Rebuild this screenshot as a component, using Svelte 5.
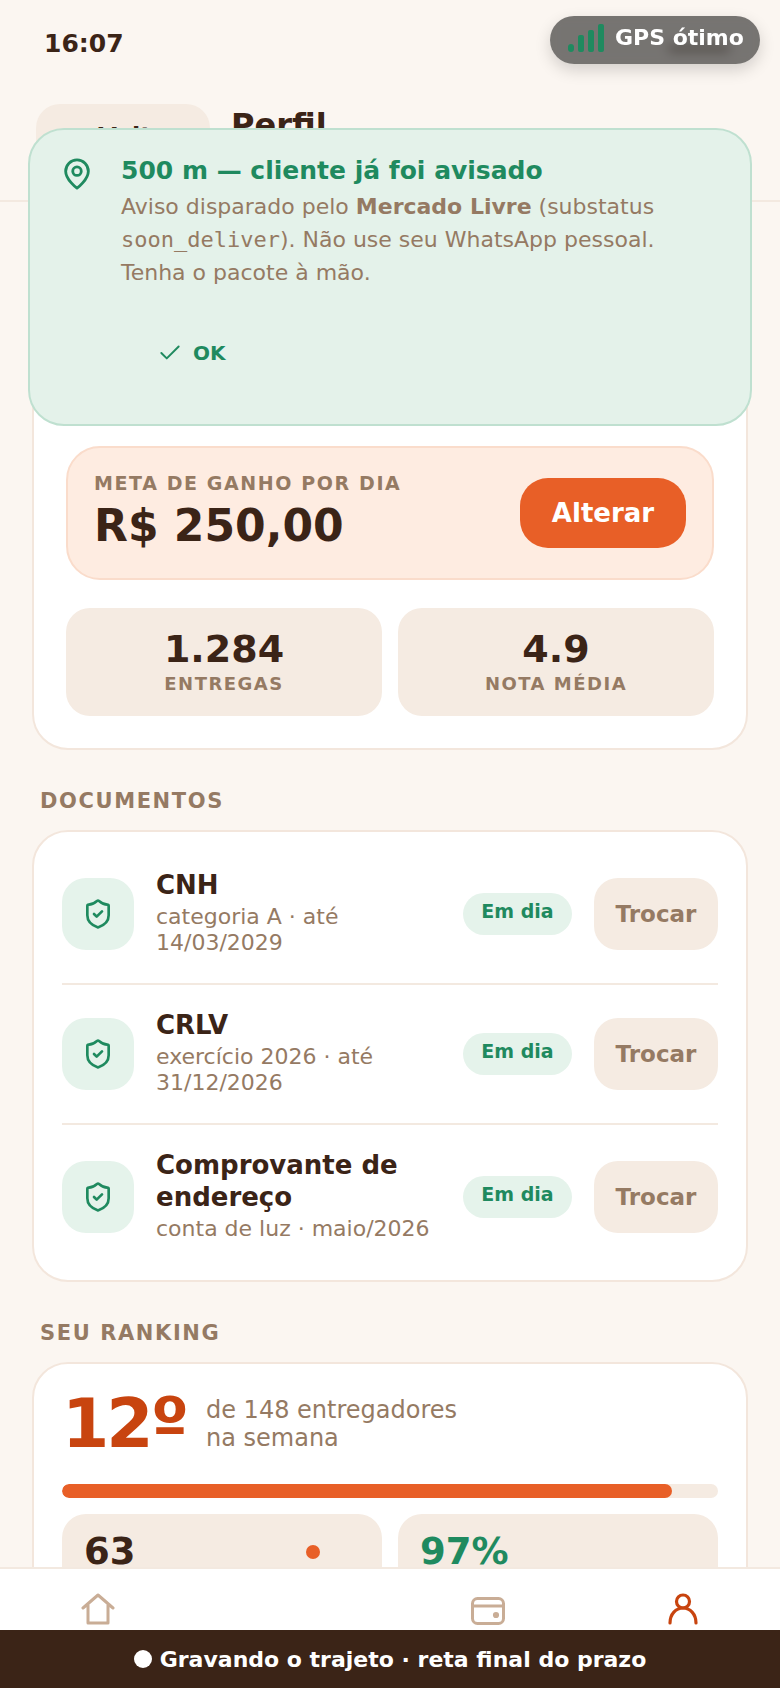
<script lang="ts">
  const docs = [
    { nome: 'CNH', detalhe: 'categoria A · até 14/03/2029' },
    { nome: 'CRLV', detalhe: 'exercício 2026 · até 31/12/2026' },
    { nome: 'Comprovante de endereço', detalhe: 'conta de luz · maio/2026' }
  ];
  const progresso = 93;
</script>

<div class="screen">
  <div class="status">
    <span class="time">16:07</span>
    <span class="status-icons"></span>
  </div>

  <header class="head">
    <button class="back">
      <svg viewBox="0 0 24 24" width="24" height="24" fill="none" stroke="currentColor" stroke-width="2.5" stroke-linecap="round" stroke-linejoin="round"><path d="M19 12H5M11 6l-6 6 6 6" /></svg>
      Voltar
    </button>
    <h1>Perfil</h1>
  </header>

  <main>
    <section class="card card-meta">
      <div class="perfil-space"></div>
      <div class="meta">
        <div class="meta-text">
          <div class="meta-label">META DE GANHO POR DIA</div>
          <div class="meta-value">R$ 250,00</div>
        </div>
        <button class="alterar">Alterar</button>
      </div>
      <div class="stats">
        <div class="stat">
          <div class="stat-value">1.284</div>
          <div class="stat-label">ENTREGAS</div>
        </div>
        <div class="stat">
          <div class="stat-value">4.9</div>
          <div class="stat-label">NOTA MÉDIA</div>
        </div>
      </div>
    </section>

    <h2>DOCUMENTOS</h2>
    <section class="card card-docs">
      {#each docs as d}
        <div class="doc">
          <div class="doc-icon">
            <svg viewBox="0 0 24 24" width="32" height="32" fill="none" stroke="currentColor" stroke-width="2" stroke-linecap="round" stroke-linejoin="round">
              <path d="M20 13c0 5-3.5 7.5-7.66 8.95a1 1 0 0 1-.67-.01C7.5 20.5 4 18 4 13V6a1 1 0 0 1 1-1c2 0 4.5-1.2 6.24-2.72a1.17 1.17 0 0 1 1.52 0C14.51 3.81 17 5 19 5a1 1 0 0 1 1 1z" />
              <path d="m9 12 2 2 4-4" />
            </svg>
          </div>
          <div class="doc-text">
            <div class="doc-nome">{d.nome}</div>
            <div class="doc-detalhe">{d.detalhe}</div>
          </div>
          <span class="badge">Em dia</span>
          <button class="trocar">Trocar</button>
        </div>
      {/each}
    </section>

    <h2 class="h-rank">SEU RANKING</h2>
    <section class="card card-rank">
      <div class="rank-top">
        <span class="rank-pos">12º</span>
        <span class="rank-sub">de 148 entregadores<br />na semana</span>
      </div>
      <div class="bar"><div class="bar-fill" style="width:{progresso}%"></div></div>
      <div class="rank-stats">
        <div class="rank-stat"><div class="rank-value">63</div></div>
        <div class="rank-stat"><div class="rank-value green">97%</div></div>
      </div>
    </section>
  </main>

  <!-- selo do GPS por cima da barra de status -->
  <div class="gps">
    <svg viewBox="0 0 36 28" width="36" height="28" fill="currentColor">
      <rect x="0" y="20" width="6" height="8" rx="3" />
      <rect x="10" y="11" width="6" height="17" rx="2" />
      <rect x="20" y="6" width="6" height="22" rx="2" />
      <rect x="30" y="0" width="6" height="28" rx="2" />
    </svg>
    GPS ótimo
  </div>

  <!-- aviso de proximidade -->
  <div class="toast">
    <svg class="pin" viewBox="0 0 24 24" width="34" height="34" fill="none" stroke="currentColor" stroke-width="2" stroke-linecap="round" stroke-linejoin="round">
      <path d="M20 10c0 6-8 12-8 12s-8-6-8-12a8 8 0 0 1 16 0Z" />
      <circle cx="12" cy="10" r="3" />
    </svg>
    <div class="toast-body">
      <div class="toast-title">500 m — cliente já foi avisado</div>
      <p>Aviso disparado pelo <strong>Mercado Livre</strong> (substatus <code>soon_deliver</code>). Não use seu WhatsApp pessoal. Tenha o pacote à mão.</p>
      <button class="ok">
        <svg viewBox="0 0 24 24" width="26" height="26" fill="none" stroke="currentColor" stroke-width="1.8" stroke-linecap="round" stroke-linejoin="round"><path d="M20 6 9 17l-5-5" /></svg>
        OK
      </button>
    </div>
  </div>

  <nav class="nav">
    <span class="nav-dot"></span>
    <div class="nav-item">
      <svg viewBox="0 0 34 32" width="34" height="32" fill="none" stroke="currentColor" stroke-width="3" stroke-linecap="round" stroke-linejoin="round">
        <path d="M2 15 17 2l15 13M7 12v18h20V12" />
      </svg>
    </div>
    <div class="nav-item"></div>
    <div class="nav-item">
      <svg viewBox="0 0 34 28" width="34" height="28" fill="none" stroke="currentColor" stroke-width="3" stroke-linecap="round" stroke-linejoin="round">
        <rect x="1.5" y="1.5" width="31" height="25" rx="5" />
        <path d="M1.5 9h31" />
        <circle cx="25" cy="18" r="1.6" />
      </svg>
    </div>
    <div class="nav-item active">
      <svg viewBox="0 0 30 32" width="30" height="32" fill="none" stroke="currentColor" stroke-width="3.2" stroke-linecap="round" stroke-linejoin="round">
        <circle cx="15" cy="8.5" r="6.5" />
        <path d="M2 30c0-9 6-15 13-15s13 6 13 15" />
      </svg>
    </div>
  </nav>

  <div class="rec"><span class="rec-dot"></span>Gravando o trajeto · reta final do prazo</div>
</div>

<style>
  :global(body) {
    background: #fbf6f1;
  }

  .screen {
    position: relative;
    height: 1688px;
    overflow: hidden;
    background: #fbf6f1;
    color: #3b2417;
    font-family: "DejaVu Sans", sans-serif;
  }

  button {
    font-family: inherit;
    border: 0;
    cursor: pointer;
  }

  .status {
    height: 104px;
    box-sizing: border-box;
    padding: 29px 50px 0 44px;
    display: flex;
    justify-content: space-between;
    align-items: flex-start;
  }
  .time {
    font-size: 25px;
    font-weight: 700;
    line-height: 30px;
  }
  /* icones do sistema, ficam atras do selo do GPS */
  .status-icons {
    width: 62px;
    height: 5px;
    margin-top: 17px;
    border-radius: 3px;
    background: #3b2417;
    opacity: 0.55;
  }

  .head {
    display: flex;
    align-items: flex-start;
    gap: 21px;
    padding: 0 36px 30px;
    border-bottom: 2px solid #f3e9e0;
  }
  .back {
    width: 174px;
    height: 66px;
    border-radius: 24px;
    background: #f5ebe2;
    color: #3b2417;
    font-size: 24px;
    font-weight: 700;
    display: flex;
    align-items: center;
    justify-content: center;
    gap: 8px;
  }
  h1 {
    margin: 3px 0 0;
    font-size: 32px;
    line-height: 36px;
    font-weight: 700;
  }

  main {
    padding: 24px 32px 0;
  }

  .card {
    background: #fff;
    border: 2px solid #f3e6dc;
    border-radius: 36px;
  }
  .card-meta {
    padding: 32px;
  }
  .perfil-space {
    height: 154px;
    margin-bottom: 32px;
  }

  .meta {
    display: flex;
    align-items: center;
    justify-content: space-between;
    height: 134px;
    box-sizing: border-box;
    padding: 0 26px;
    background: #feece1;
    border: 2px solid #fadccb;
    border-radius: 34px;
  }
  .meta-text {
    padding-bottom: 3px;
  }
  .meta-label {
    font-size: 19px;
    font-weight: 700;
    letter-spacing: 1.6px;
    line-height: 24px;
    color: #957a63;
  }
  .meta-value {
    margin-top: 5px;
    font-size: 44px;
    font-weight: 700;
    line-height: 52px;
  }
  .alterar {
    width: 166px;
    height: 70px;
    border-radius: 28px;
    background: #e85f27;
    color: #fff;
    font-size: 26px;
    font-weight: 700;
  }

  .stats {
    display: grid;
    grid-template-columns: 1fr 1fr;
    gap: 16px;
    margin-top: 28px;
  }
  .stat {
    height: 108px;
    box-sizing: border-box;
    padding-top: 19px;
    background: #f5ebe2;
    border-radius: 24px;
    text-align: center;
  }
  .stat-value {
    font-size: 38px;
    font-weight: 700;
    line-height: 45px;
  }
  .stat-label {
    font-size: 18px;
    font-weight: 700;
    letter-spacing: 1.5px;
    line-height: 24px;
    color: #957a63;
  }

  h2 {
    margin: 37px 0 15px 8px;
    font-size: 21px;
    font-weight: 700;
    letter-spacing: 1.6px;
    line-height: 28px;
    color: #957a63;
  }

  .card-docs {
    padding: 13px 28px 11px;
  }
  .doc {
    display: flex;
    align-items: center;
    gap: 22px;
    padding: 23.5px 0;
    border-bottom: 2px solid #f3e9e0;
  }
  .doc:last-child {
    border-bottom: 0;
  }
  .doc-icon {
    flex: none;
    width: 72px;
    height: 72px;
    border-radius: 24px;
    background: #e5f3eb;
    color: #1f8a5f;
    display: grid;
    place-items: center;
  }
  .doc-text {
    flex: 1;
    min-width: 0;
    padding-bottom: 4px;
  }
  .doc-nome {
    font-size: 26px;
    font-weight: 700;
    line-height: 32px;
  }
  .doc-detalhe {
    margin-top: 3px;
    font-size: 22px;
    line-height: 26px;
    color: #957a63;
  }
  .badge {
    flex: none;
    width: 109px;
    height: 42px;
    border-radius: 21px;
    background: #e5f3eb;
    color: #1f8a5f;
    font-size: 19px;
    font-weight: 700;
    text-align: center;
    line-height: 36px;
  }
  .trocar {
    flex: none;
    width: 124px;
    height: 72px;
    border-radius: 24px;
    background: #f5ebe2;
    color: #957a63;
    font-size: 23px;
    font-weight: 700;
  }

  .card-rank {
    padding: 28px;
  }
  .rank-top {
    display: flex;
    align-items: center;
    gap: 20px;
    height: 64px;
  }
  .rank-pos {
    font-size: 68px;
    font-weight: 700;
    line-height: 64px;
    letter-spacing: -3px;
    color: #c8440f;
  }
  .rank-sub {
    font-size: 24px;
    line-height: 28px;
    color: #957a63;
  }
  .bar {
    height: 14px;
    margin-top: 28px;
    border-radius: 7px;
    background: #f5ebe2;
    overflow: hidden;
  }
  .bar-fill {
    height: 100%;
    border-radius: 7px;
    background: #e85f27;
  }
  .rank-stats {
    display: grid;
    grid-template-columns: 1fr 1fr;
    gap: 16px;
    margin-top: 16px;
  }
  .rank-stat {
    height: 108px;
    padding: 15px 22px;
    box-sizing: border-box;
    background: #f5ebe2;
    border-radius: 24px;
  }
  .rank-value {
    font-size: 37px;
    font-weight: 700;
    line-height: 46px;
  }
  .green {
    color: #1f8a5f;
  }

  .gps {
    position: absolute;
    top: 16px;
    right: 20px;
    width: 210px;
    height: 48px;
    box-sizing: border-box;
    padding: 0 0 6px 18px;
    display: flex;
    align-items: center;
    gap: 11px;
    border-radius: 24px;
    background: rgba(0, 0, 0, 0.53);
    backdrop-filter: blur(6px);
    box-shadow: 0 6px 16px rgba(0, 0, 0, 0.16);
    color: #fff;
    font-size: 22px;
    font-weight: 700;
  }
  .gps svg {
    color: #1f8a5f;
    margin-top: 2px;
  }

  .toast {
    position: absolute;
    top: 128px;
    left: 28px;
    width: 724px;
    height: 298px;
    box-sizing: border-box;
    padding: 25px 30px;
    display: flex;
    gap: 27px;
    background: #e4f2ea;
    border: 2px solid #bfe0d0;
    border-radius: 36px;
  }
  .pin {
    flex: none;
    color: #1f8a5f;
    margin-top: 2px;
  }
  .toast-title {
    font-size: 25px;
    font-weight: 700;
    line-height: 31px;
    color: #1f8a5f;
  }
  .toast p {
    margin: 4px 0 0;
    font-size: 22px;
    line-height: 33px;
    color: #957a63;
  }
  code {
    font-family: "DejaVu Sans Mono", monospace;
    font-size: 22px;
  }
  .ok {
    margin-top: 28px;
    height: 72px;
    padding: 0 36px;
    background: transparent;
    color: #1f8a5f;
    font-size: 20px;
    font-weight: 700;
    display: flex;
    align-items: center;
    gap: 10px;
  }

  .nav {
    position: absolute;
    left: 0;
    right: 0;
    bottom: 58px;
    height: 63px;
    box-sizing: border-box;
    padding-top: 24px;
    display: grid;
    grid-template-columns: repeat(4, 1fr);
    align-items: start;
    background: #fff;
    border-top: 2px solid #f3e9e0;
  }
  .nav-item {
    display: flex;
    justify-content: center;
    color: #c9ad96;
    height: 32px;
    align-items: flex-end;
  }
  .nav-item.active {
    color: #c8440f;
  }
  .nav-dot {
    position: absolute;
    left: 306px;
    top: -24px;
    width: 14px;
    height: 14px;
    border-radius: 50%;
    background: #e85f27;
  }

  .rec {
    position: absolute;
    left: 0;
    right: 0;
    bottom: 0;
    height: 58px;
    display: flex;
    align-items: center;
    justify-content: center;
    gap: 8px;
    background: #3b2417;
    color: #fff;
    font-size: 22px;
    font-weight: 700;
  }
  .rec-dot {
    width: 18px;
    height: 18px;
    border-radius: 50%;
    background: #fff;
  }
</style>
